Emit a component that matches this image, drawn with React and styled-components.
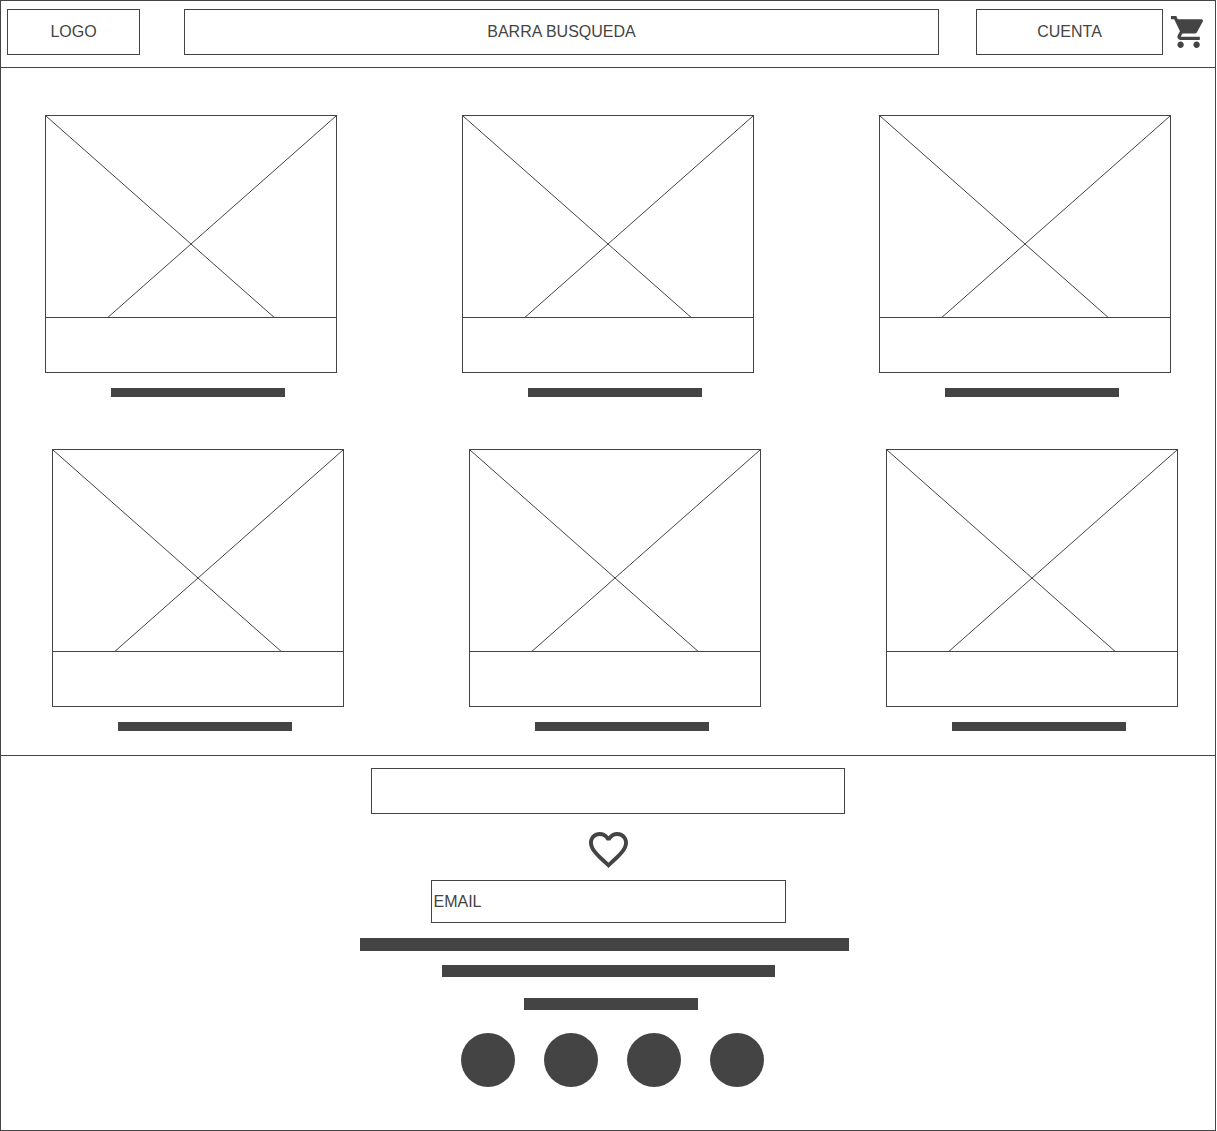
import React from "react";
import styled, { createGlobalStyle } from "styled-components";

const ink = "#444444";
const paper = "#ffffff";

const GlobalStyle = createGlobalStyle`
  *, *::before, *::after { box-sizing: border-box; }
  body {
    margin: 0;
    background: ${paper};
    color: ${ink};
    font: 16px/20px "Liberation Sans", Arial, sans-serif;
  }
`;

const Page = styled.div`
  display: flex;
  flex-direction: column;
  min-height: 100vh;
  margin-right: 1px;
  border: 1px solid ${ink};
`;

const Header = styled.header`
  display: flex;
  align-items: center;
  padding: 8px 12px 12px 6px;
  border-bottom: 1px solid ${ink};
`;

const Logo = styled.a`
  display: flex;
  align-items: center;
  justify-content: center;
  flex: 0 0 133px;
  height: 46px;
  margin-right: 44px;
  border: 1px solid ${ink};
  color: inherit;
  text-decoration: none;
`;

const Field = styled.input`
  display: block;
  height: 46px;
  min-width: 0;
  padding: 0 2px;
  border: 1px solid ${ink};
  border-radius: 0;
  background: ${paper};
  color: inherit;
  font: inherit;

  &::placeholder {
    color: ${ink};
    opacity: 1;
  }
`;

const SearchForm = styled.form`
  display: flex;
  flex: 1 1 auto;
  min-width: 0;
  margin-right: 37px;
`;

const SearchField = styled(Field)`
  flex: 1 1 auto;
  width: 100%;
  text-align: center;
`;

const AccountButton = styled.button`
  flex: 0 0 187px;
  height: 46px;
  margin-right: 8px;
  padding: 0;
  border: 1px solid ${ink};
  background: ${paper};
  color: inherit;
  font: inherit;
  cursor: pointer;
`;

const IconButton = styled.button`
  display: flex;
  flex: none;
  padding: 0;
  border: 0;
  background: none;
  color: inherit;
  cursor: pointer;
`;

const Catalog = styled.main`
  display: flex;
  flex-direction: column;
  gap: 52px;
  padding: 47px 0 24px;
  border-bottom: 1px solid ${ink};
`;

const ProductRow = styled.div`
  display: flex;
  justify-content: space-between;
  gap: 24px;
  padding: ${({ $shifted }) => ($shifted ? "0 37px 0 51px" : "0 44px")};
`;

const Product = styled.article`
  display: flex;
  flex-direction: column;
  align-items: center;
  flex: 0 1 292px;
  min-width: 0;
`;

const ProductCard = styled.div`
  width: 100%;
  border: 1px solid ${ink};
`;

const Picture = styled.svg`
  display: block;
  width: 100%;
  height: 201px;
  overflow: hidden;
`;

const Caption = styled.div`
  height: 55px;
  border-top: 1px solid ${ink};
`;

const ProductTitle = styled.div`
  width: 174px;
  max-width: 100%;
  height: 9px;
  margin: 15px 0 0 14px;
  background: ${ink};
`;

const Footer = styled.footer`
  display: flex;
  flex-direction: column;
  align-items: center;
  padding: 12px 12px 40px;
`;

const MessageField = styled(Field)`
  width: 474px;
  max-width: 100%;
  margin-bottom: 18px;
`;

const EmailField = styled(Field)`
  width: 355px;
  max-width: 100%;
  height: 43px;
  margin: 12px 0 15px;
`;

const FooterText = styled.div`
  width: 496px;
  max-width: 100%;
  padding-right: 7px;
`;

const TextLine = styled.div`
  width: ${({ $width }) => $width}px;
  max-width: 100%;
  height: ${({ $height = 12 }) => $height}px;
  margin-top: ${({ $gap = 0 }) => $gap}px;
  margin-left: ${({ $level = 0 }) => $level * 82}px;
  background: ${ink};
`;

const SocialLinks = styled.nav`
  display: flex;
  gap: 29px;
  margin-top: 23px;
  padding-left: 9px;
`;

const SocialLink = styled.a`
  width: 54px;
  height: 54px;
  border-radius: 50%;
  background: ${ink};
`;

const CartIcon = () => (
  <svg width="32" height="32" viewBox="1 2 20 20" fill="currentColor" aria-hidden="true">
    <path d="M7 18c-1.1 0-1.99.9-1.99 2S5.9 22 7 22s2-.9 2-2-.9-2-2-2zM1 2v2h2l3.6 7.59-1.35 2.45c-.16.28-.25.61-.25.96 0 1.1.9 2 2 2h12v-2H7.42c-.14 0-.25-.11-.25-.25l.03-.12.9-1.63h7.45c.75 0 1.41-.41 1.75-1.03l3.58-6.49c.08-.14.12-.31.12-.48 0-.55-.45-1-1-1H5.21l-.94-2H1zm16 16c-1.1 0-1.99.9-1.99 2s.89 2 1.99 2 2-.9 2-2-.9-2-2-2z" />
  </svg>
);

const HeartIcon = () => (
  <svg width="39" height="36" viewBox="2 3 20 18.35" fill="currentColor" aria-hidden="true">
    <path d="M16.5 3c-1.74 0-3.41.81-4.5 2.09C10.91 3.81 9.24 3 7.5 3 4.42 3 2 5.42 2 8.5c0 3.78 3.4 6.86 8.55 11.54L12 21.35l1.45-1.32C18.6 15.36 22 12.28 22 8.5 22 5.42 19.58 3 16.5 3zm-4.4 15.55l-.1.1-.1-.1C7.14 14.24 4 11.39 4 8.5 4 6.5 5.5 5 7.5 5c1.54 0 3.04.99 3.57 2.36h1.87C13.46 5.99 14.96 5 16.5 5c2 0 3.5 1.5 3.5 3.5 0 2.89-3.14 5.74-7.9 10.05z" />
  </svg>
);

const ProductItem = () => (
  <Product>
    <ProductCard>
      <Picture viewBox="0 0 290 201" preserveAspectRatio="none" aria-hidden="true">
        <path d="M0 0L290 256M290 0L0 256" fill="none" stroke={ink} strokeWidth="1" />
      </Picture>
      <Caption />
    </ProductCard>
    <ProductTitle />
  </Product>
);

const rows = [
  { id: "first", shifted: false },
  { id: "second", shifted: true },
];
const columns = [1, 2, 3];
const networks = ["Facebook", "Instagram", "Twitter", "YouTube"];

export default function App() {
  return (
    <>
      <GlobalStyle />
      <Page>
        <Header>
          <Logo href="#">LOGO</Logo>
          <SearchForm role="search">
            <SearchField type="text" aria-label="Barra busqueda" placeholder="BARRA BUSQUEDA" />
          </SearchForm>
          <AccountButton type="button">CUENTA</AccountButton>
          <IconButton type="button" aria-label="Carrito">
            <CartIcon />
          </IconButton>
        </Header>

        <Catalog>
          {rows.map((row) => (
            <ProductRow key={row.id} $shifted={row.shifted}>
              {columns.map((column) => (
                <ProductItem key={column} />
              ))}
            </ProductRow>
          ))}
        </Catalog>

        <Footer>
          <MessageField type="text" aria-label="Mensaje" />
          <IconButton type="button" aria-label="Favoritos">
            <HeartIcon />
          </IconButton>
          <EmailField type="email" aria-label="Email" placeholder="EMAIL" />
          <FooterText>
            <TextLine $width={489} $height={13} />
            <TextLine $width={333} $gap={14} $level={1} />
            <TextLine $width={174} $gap={21} $level={2} />
          </FooterText>
          <SocialLinks aria-label="Redes sociales">
            {networks.map((name) => (
              <SocialLink key={name} href="#" aria-label={name} />
            ))}
          </SocialLinks>
        </Footer>
      </Page>
    </>
  );
}
